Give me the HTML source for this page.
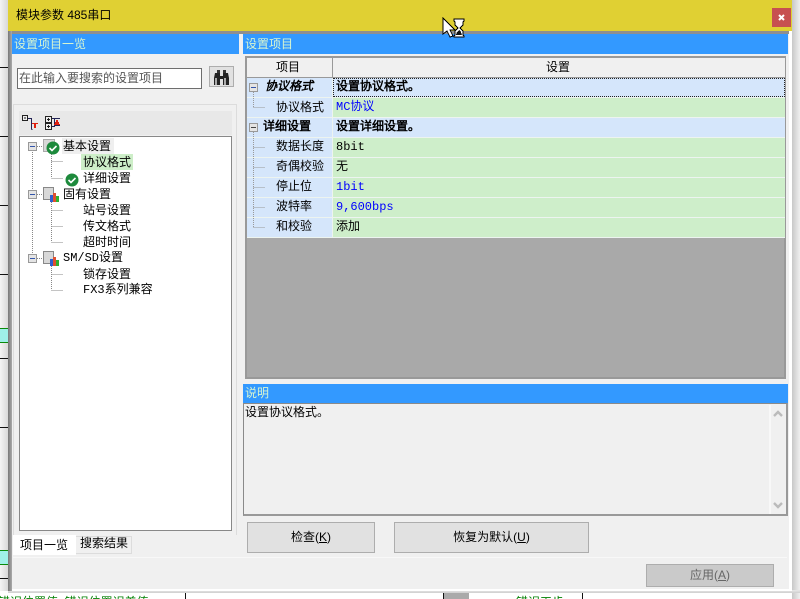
<!DOCTYPE html>
<html><head><meta charset="utf-8">
<style>
html,body{margin:0;padding:0;}
body{width:800px;height:599px;overflow:hidden;position:relative;background:#f0f0f0;font-family:"WenQuanYi Zen Hei","Liberation Sans",sans-serif;font-size:12px;color:#000;-webkit-font-smoothing:none;}
.a{position:absolute;box-sizing:border-box;}
.t{position:absolute;white-space:nowrap;line-height:16px;height:16px;}
.m{font-family:"Liberation Mono","WenQuanYi Zen Hei",monospace;}
.hd{background:#3399ff;color:#d8f5d0;padding:2px 0 0 2px;line-height:16px;}
.c1{position:absolute;left:247px;width:85px;height:19px;background:#d5e6fb;}
.c2{position:absolute;left:333px;width:452px;height:19px;background:#ceeeca;line-height:17px;padding-left:3px;box-sizing:border-box;}
.c2.h{background:#d5e6fb;font-weight:bold;}
.c2.m{line-height:19px;}
.blue{color:#0000ff;}
.lbl{position:absolute;left:276px;line-height:19px;height:19px;white-space:nowrap;}
.btn{position:absolute;box-sizing:border-box;background:#e1e1e1;border:1px solid #adadad;text-align:center;}
svg{position:absolute;overflow:visible;}
</style></head><body>
<!-- background window hints -->
<div class="a" style="left:0;top:0;width:8px;height:599px;background:linear-gradient(90deg,#f4f4f4,#d8d8d8);"></div>
<div class="a" style="left:0;top:67px;width:8px;height:1px;background:#111;"></div>
<div class="a" style="left:0;top:136px;width:8px;height:1px;background:#111;"></div>
<div class="a" style="left:0;top:205px;width:8px;height:1px;background:#111;"></div>
<div class="a" style="left:0;top:274px;width:8px;height:1px;background:#111;"></div>
<div class="a" style="left:0;top:328px;width:8px;height:15px;background:#9ff0e8;border-top:1px solid #0a8a0a;border-bottom:1px solid #0a8a0a;"></div>
<div class="a" style="left:0;top:358px;width:8px;height:1px;background:#111;"></div>
<div class="a" style="left:0;top:427px;width:8px;height:1px;background:#111;"></div>
<div class="a" style="left:0;top:550px;width:8px;height:15px;background:#9ff0e8;border-top:1px solid #0a8a0a;border-bottom:1px solid #0a8a0a;"></div>
<div class="a" style="left:0;top:578px;width:8px;height:1px;background:#111;"></div>
<div class="a" style="left:0;top:591px;width:800px;height:8px;background:#fff;overflow:hidden;">
  <div class="t" style="left:-2px;top:3px;color:#008000;">错误位置值&nbsp;&nbsp;错误位置误差值</div>
  <div class="a" style="left:185px;top:0;width:1px;height:8px;background:#111;"></div>
  <div class="a" style="left:443px;top:0;width:26px;height:8px;background:#aaa;border-left:1px solid #111;"></div>
  <div class="t" style="left:516px;top:3px;color:#008000;">错误工步</div>
  <div class="a" style="left:582px;top:0;width:1px;height:8px;background:#111;"></div>
</div>
<div class="a" style="left:792px;top:0;width:8px;height:599px;background:linear-gradient(90deg,#c8c8c8,#efefef);"></div>
<div class="a" style="left:8px;top:590px;width:792px;height:3px;background:linear-gradient(#e8e8e8,#cfcfcf);"></div>

<!-- dialog -->
<div class="a" style="left:8px;top:0;width:784px;height:591px;background:#f0f0f0;border-right:3px solid #fff;border-bottom:2px solid #fff;"></div>
<div class="a" style="left:8px;top:0;width:784px;height:31px;background:#e0d033;"></div>
<div class="t" style="left:16px;top:7px;">模块参数 485串口</div>
<div class="a" style="left:772px;top:8px;width:19px;height:19px;background:#c75050;"></div>
<svg style="left:772px;top:8px" width="19" height="19"><path d="M7 7l5 5M12 7l-5 5" stroke="#fff" stroke-width="2"/></svg>
<div class="a" style="left:8px;top:31px;width:781px;height:3px;background:#8f8f8f;"></div>
<div class="a" style="left:8px;top:31px;width:4px;height:560px;background:linear-gradient(90deg,#777,#aaa);"></div>

<!-- left -->
<div class="a hd" style="left:12px;top:34px;width:227px;height:20px;">设置项目一览</div>
<div class="a" style="left:17px;top:68px;width:185px;height:21px;background:#fff;border:1px solid #6e6e6e;"></div>
<div class="t" style="left:19px;top:70px;color:#555;">在此输入要搜索的设置项目</div>
<div class="a" style="left:209px;top:66px;width:25px;height:21px;background:#e1e1e1;border:1px solid #adadad;"></div>
<svg style="left:209px;top:66px" width="25" height="21">
 <path d="M6 7h5v3h3V7h5l1 5v7h-6v-6h-3v6H5v-7z" fill="#222"/>
 <path d="M8 4h3v3H8zM14 4h3v3h-3z" fill="#333"/>
 <path d="M6 12h2v7H6zM15 12h2v7h-2z" fill="#aaa"/>
</svg>

<div class="a" style="left:13px;top:104px;width:224px;height:431px;border:1px solid #dcdcdc;border-bottom:none;"></div>
<div class="a" style="left:19px;top:111px;width:213px;height:24px;background:#e8e8e8;"></div>
<svg style="left:19px;top:111px" width="50" height="24" shape-rendering="crispEdges">
 <rect x="3.5" y="4.5" width="5" height="5" fill="#eee" stroke="#222"/><path d="M5 7h2" stroke="#222"/>
 <path d="M9 7.5h3.5v11M12.5 12.5h6M12.5 18.5h1" stroke="#225" fill="none"/>
 <path d="M13 12h6v1h-2v4h-2v-4h-2z" fill="#e02010"/>
 <rect x="26.5" y="5.5" width="6" height="6" fill="#eee" stroke="#222"/><path d="M28 8.5h3M29.5 7v3" stroke="#222"/>
 <rect x="26.5" y="12.5" width="6" height="6" fill="#eee" stroke="#222"/><path d="M28 15.5h3M29.5 14v3" stroke="#222"/>
 <path d="M33 7.5h8M33 15.5h3M35.5 7.5v8M36 14.5h5" stroke="#225" fill="none"/>
 <path d="M35 14h6v-1h-1v-2h-1V9h-2v2h-1v2h-1z" fill="#e02010"/>
</svg>
<div class="a" style="left:19px;top:136px;width:213px;height:395px;background:#fff;border:1px solid #888;"></div>

<!-- tree lines -->
<svg style="left:0;top:0" width="240" height="300" shape-rendering="crispEdges">
 <path d="M32.5 152v106M37 146.5h6M37 194.5h6M37 258.5h6M51.5 152v26M51.5 161.5h11M51.5 178.5h12M51.5 200v42M51.5 210.5h11M51.5 226.5h11M51.5 242.5h11M51.5 264v26M51.5 274.5h11M51.5 290.5h11" stroke="#888" stroke-dasharray="1 1" fill="none"/>
 <rect x="28.5" y="142.5" width="8" height="8" fill="#e4e4e4" stroke="#999"/><path d="M30 146.5h5" stroke="#3355aa"/>
 <rect x="28.5" y="190.5" width="8" height="8" fill="#e4e4e4" stroke="#999"/><path d="M30 194.5h5" stroke="#3355aa"/>
 <rect x="28.5" y="254.5" width="8" height="8" fill="#e4e4e4" stroke="#999"/><path d="M30 258.5h5" stroke="#3355aa"/>
 <rect x="43.5" y="139.5" width="11" height="12" fill="#d8d8d8" stroke="#aaa"/>
 <rect x="43.5" y="187.5" width="10" height="12" fill="#d8d8d8" stroke="#888"/><rect x="50" y="195" width="3" height="7" fill="#3060d0"/><rect x="53" y="193" width="3" height="9" fill="#e05030"/><rect x="56" y="196" width="3" height="6" fill="#30b030"/>
 <rect x="43.5" y="251.5" width="10" height="12" fill="#d8d8d8" stroke="#888"/><rect x="50" y="259" width="3" height="7" fill="#3060d0"/><rect x="53" y="257" width="3" height="9" fill="#e05030"/><rect x="56" y="260" width="3" height="6" fill="#30b030"/>
</svg>
<svg style="left:0;top:0" width="240" height="200">
 <circle cx="53" cy="148" r="6.5" fill="#1d8a3c"/><path d="M49.5 148l2.5 2.5 4.5-4.5" stroke="#fff" stroke-width="1.6" fill="none"/>
 <circle cx="72" cy="180" r="6.5" fill="#1d8a3c"/><path d="M68.5 180l2.5 2.5 4.5-4.5" stroke="#fff" stroke-width="1.6" fill="none"/>
</svg>
<div class="a" style="left:62px;top:138px;width:52px;height:16px;background:#efefef;"></div>
<div class="a" style="left:81px;top:154px;width:52px;height:16px;background:#cdeec8;"></div>
<div class="t" style="left:63px;top:138px;">基本设置</div>
<div class="t" style="left:83px;top:154px;">协议格式</div>
<div class="t" style="left:83px;top:170px;">详细设置</div>
<div class="t" style="left:63px;top:186px;">固有设置</div>
<div class="t" style="left:83px;top:202px;">站号设置</div>
<div class="t" style="left:83px;top:218px;">传文格式</div>
<div class="t" style="left:83px;top:234px;">超时时间</div>
<div class="t m" style="left:63px;top:250px;">SM/SD设置</div>
<div class="t" style="left:83px;top:266px;">锁存设置</div>
<div class="t m" style="left:83px;top:282px;">FX3系列兼容</div>

<!-- tabs -->
<div class="a" style="left:13px;top:535px;width:63px;height:20px;background:#fff;"></div>
<div class="t" style="left:20px;top:537px;">项目一览</div>
<div class="a" style="left:76px;top:536px;width:56px;height:18px;background:#f0f0f0;border-right:1px solid #dcdcdc;border-bottom:1px solid #dcdcdc;border-top:1px solid #dcdcdc;"></div>
<div class="t" style="left:80px;top:535px;">搜索结果</div>

<!-- right -->
<div class="a hd" style="left:243px;top:34px;width:545px;height:20px;">设置项目</div>
<div class="a" style="left:245px;top:56px;width:541px;height:323px;background:#a9a9a9;border:2px solid #999;"></div>
<div class="a" style="left:247px;top:58px;width:85px;height:19px;background:#f0f0f0;"></div>
<div class="a" style="left:333px;top:58px;width:452px;height:19px;background:#f0f0f0;"></div>
<div class="a" style="left:332px;top:58px;width:1px;height:19px;background:#999;"></div>
<div class="a" style="left:247px;top:77px;width:538px;height:1px;background:#999;"></div>
<div class="t" style="left:276px;top:59px;">项目</div>
<div class="t" style="left:546px;top:59px;">设置</div>

<div class="a" style="left:247px;top:78px;width:538px;height:160px;background:#edf4f0;"></div>
<div class="c1" style="top:78px;"></div><div class="c2 h" style="top:78px;outline:1px dotted #222;outline-offset:-1px;">设置协议格式。</div>
<div class="c1" style="top:98px;"></div><div class="c2 blue m" style="top:98px;">MC协议</div>
<div class="c1" style="top:118px;"></div><div class="c2 h" style="top:118px;">设置详细设置。</div>
<div class="c1" style="top:138px;"></div><div class="c2 m" style="top:138px;">8bit</div>
<div class="c1" style="top:158px;"></div><div class="c2" style="top:158px;">无</div>
<div class="c1" style="top:178px;"></div><div class="c2 blue m" style="top:178px;">1bit</div>
<div class="c1" style="top:198px;"></div><div class="c2 blue m" style="top:198px;">9,600bps</div>
<div class="c1" style="top:218px;"></div><div class="c2" style="top:218px;">添加</div>

<div class="lbl" style="left:265px;top:77px;font-weight:bold;font-style:italic;">协议格式</div>
<div class="lbl" style="top:98px;">协议格式</div>
<div class="lbl" style="left:263px;top:117px;font-weight:bold;">详细设置</div>
<div class="lbl" style="top:137px;">数据长度</div>
<div class="lbl" style="top:157px;">奇偶校验</div>
<div class="lbl" style="top:177px;">停止位</div>
<div class="lbl" style="top:197px;">波特率</div>
<div class="lbl" style="top:217px;">和校验</div>
<svg style="left:0;top:0" width="300" height="240" shape-rendering="crispEdges">
 <path d="M253.5 92v15M253.5 107.5h12M253.5 132v95M253.5 147.5h12M253.5 167.5h12M253.5 187.5h12M253.5 207.5h12M253.5 227.5h12" stroke="#999" stroke-dasharray="1 1" fill="none"/>
 <rect x="249.5" y="83.5" width="8" height="8" fill="#e4e4e4" stroke="#999"/><path d="M251 87.5h5" stroke="#3355aa"/>
 <rect x="249.5" y="123.5" width="8" height="8" fill="#e4e4e4" stroke="#999"/><path d="M251 127.5h5" stroke="#444"/>
</svg>

<!-- description -->
<div class="a hd" style="left:243px;top:384px;width:545px;height:20px;padding-top:1px;">说明</div>
<div class="a" style="left:243px;top:403px;width:545px;height:113px;border:1px solid #8a8a8a;border-right:2px solid #999;border-bottom:2px solid #999;background:#f0f0f0;"></div>
<div class="t" style="left:245px;top:404px;">设置协议格式。</div>
<div class="a" style="left:769px;top:405px;width:2px;height:109px;background:#f8f8f8;"></div>
<svg style="left:771px;top:405px" width="15" height="109"><path d="M3 11l4-4 4 4" stroke="#bbb" stroke-width="2.4" fill="none"/><path d="M3 98l4 4 4-4" stroke="#bbb" stroke-width="2.4" fill="none"/></svg>

<!-- buttons -->
<div class="btn" style="left:247px;top:522px;width:128px;height:31px;line-height:28px;">检查(<u>K</u>)</div>
<div class="btn" style="left:394px;top:522px;width:195px;height:31px;line-height:28px;">恢复为默认(<u>U</u>)</div>
<div class="a" style="left:13px;top:557px;width:774px;height:1px;background:#f8f8f8;"></div>
<div class="btn" style="left:646px;top:564px;width:128px;height:23px;line-height:20px;background:#cacaca;color:#666;">应用(<u>A</u>)</div>

<!-- cursor -->
<svg style="left:442px;top:17px" width="24" height="22" shape-rendering="crispEdges">
 <path d="M1 1v16l4-3 3 6 3-1-3-6h5z" fill="#fff" stroke="#000"/>
 <path d="M12 2h10v2l-1 1v3l-3 3 3 3v4l1 1v1H12v-1l1-1v-4l3-3-3-3V5l-1-1z" fill="#fff" stroke="#000"/>
 <path d="M15 15l2-2 2 2 1 3h-6z" fill="#111"/>
</svg>
</body></html>
